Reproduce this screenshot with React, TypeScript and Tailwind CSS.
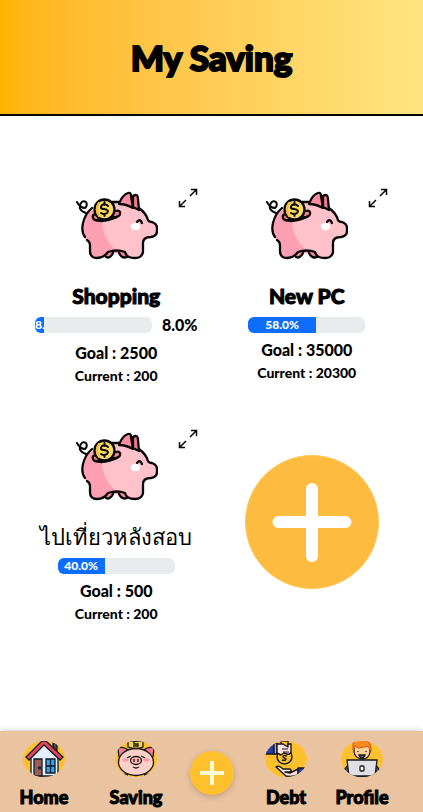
import React from "react";

type Goal = { name: string; percent: number; goal: number; current: number; outside?: boolean; thai?: boolean };

const goals: Goal[] = [
  { name: "Shopping", percent: 8, goal: 2500, current: 200, outside: true },
  { name: "New PC", percent: 58, goal: 35000, current: 20300 },
  { name: "ไปเที่ยวหลังสอบ", percent: 40, goal: 500, current: 200, thai: true },
];

function PiggyBank() {
  return (
    <svg viewBox="0 0 82 70" className="h-[70px] w-[82px]" fill="none" stroke="#080808" strokeWidth="2.3" strokeLinecap="round" strokeLinejoin="round" aria-hidden="true">
      <path d="M29 66 33 60H47L52 66Q47 69 43 62H37Q34 68 29 66Z" fill="#ff8a9f" stroke="none" />
      <path d="M14 61Q15 67 21 67Q27 67 29 63Q30 60 33 60H47Q50 67 57 67Q66 67 67 61V51Q68 46 74 46Q81 45 81 40V35Q79 31 73 30Q70 21 63 17L36 11Q15 14 8 29Q3 41 11 49L14 53Z" fill="#ffc2ca" stroke="none" />
      <path d="M27 20Q15 14 8 29Q3 41 11 49L14 53V61Q15 67 21 67Q27 67 29 63Q30 60 33 60H41Q26 47 26 29Z" fill="#ffa0b2" stroke="none" />
      <path d="M57 5Q62 2 62 8L63 19 57 16Z" fill="#f37991" />
      <path d="M43 13Q46 4 52 2Q55 1 55 5L57 17Q50 13 43 13Z" fill="#ff8ca2" />
      <path d="M36 11H43M63 17Q70 22 72 29Q73 31 76 31Q81 33 81 37V40Q81 45 75 46Q67 46 67 52V61Q66 67 59 67Q50 67 49 61Q41 58 32 61Q28 67 21 67Q14 67 14 60V54Q14 51 11 49M9 46Q5 41 7 32Q9 23 16 17" />
      <path d="M30 66Q34 68 37 62M51 66Q46 68 43 62" />
      <path d="M1 11Q4 17 9 17Q12 14 10 11Q7 9 5 12Q1 19 10 22" strokeWidth="2" />
      <path d="M19 23Q16 24 17 27Q18 30 22 29L40 26Q45 25 44 21Q43 19 40 20" fill="#f48097" />
      <circle cx="28.500" cy="18.500" r="10" fill="#ffda65" />
      <path d="M23 12Q19 18 23 25" stroke="#f6bb42" />
      <path d="M32 15Q29 12 26 14Q23 18 28 18Q34 19 31 22Q28 24 25 22M28.500 11V14M28.500 23V25" strokeWidth="2" />
      <path d="M19 29Q28 32 41 26" />
      <path d="M61 31Q64 27 66 32" />
      <ellipse cx="59.500" cy="35.500" rx="4.800" ry="3.800" fill="#fff" stroke="none" />
    </svg>
  );
}

function ExpandIcon() {
  return (
    <svg viewBox="0 0 20 20" className="size-5" fill="none" stroke="#050505" strokeWidth="1.5" aria-hidden="true">
      <path d="M12 8 18.5 1.5 M13 1.5H18.5V7 M8 12 1.5 18.5 M1.5 13V18.5H7" />
    </svg>
  );
}

function GoalCard({ name, percent, goal, current, outside, thai }: Goal) {
  const label = `${percent.toFixed(1)}%`;
  return (
    <article className="flex h-[241px] flex-col items-center">
      <div className="flex w-full items-start justify-end pr-[14px]">
        <div className="mr-5 mt-[3px]">
          <PiggyBank />
        </div>
        <button type="button" aria-label={`Expand ${name}`}>
          <ExpandIcon />
        </button>
      </div>
      <h2 className={`mt-[21px] h-7 whitespace-nowrap leading-7 ${thai ? "text-[22px] font-normal" : "text-[21px] [-webkit-text-stroke:1px]"}`}>{name}</h2>
      <div className={`mt-[7px] flex items-start gap-[10px] ${outside ? "pb-[3px]" : ""}`}>
        <div role="progressbar" aria-label={name} aria-valuenow={percent} aria-valuemin={0} aria-valuemax={100} className="h-4 w-[117px] overflow-hidden rounded-md bg-[#e9ecef]">
          <div className={`flex h-full overflow-hidden bg-[#0d6efd] text-xs leading-4 text-white ${outside ? "justify-start" : "justify-center"}`} style={{ width: `${percent}%` }}>
            {label}
          </div>
        </div>
        {outside && <span className="text-base leading-4">{label}</span>}
      </div>
      <p className="mt-[5px] text-base leading-6">Goal : {goal}</p>
      <p className="text-sm leading-[22px]">Current : {current}</p>
    </article>
  );
}

function HomeArt() {
  return (
    <g stroke="#111827" strokeWidth="1.3">
      <path d="M30 2H34V13L30 10Z" fill="#46464c" />
      <path d="M8 35V13L21 1 35 13V35Z" fill="#e5f0ff" />
      <path d="M3 16 19 0H23L40 16 37 19 21 4 6 19Z" fill="#e84455" />
      <path d="M11 18H19V35H11Z" fill="#976052" />
      <circle cx="16.500" cy="27" r="1" fill="#f8c86b" />
      <path d="M23 18H32V32H23ZM27.500 18V32M23 25H32" fill="#31a4ee" />
    </g>
  );
}

function PigArt() {
  return (
    <g stroke="#18181b" strokeWidth="1.3">
      <path d="M4 16 3 7Q9 5 14 10M38 16 39 7Q33 5 28 10" fill="#f27e91" />
      <path d="M8 34H13M29 34H34" strokeWidth="3" />
      <ellipse cx="21" cy="21" rx="17.500" ry="13.500" fill="#ffd0c7" />
      <path d="M13 0H28V6Q21 9 13 6Z" fill="#efd34d" />
      <path d="M23 0H19V3H23V5H18" fill="none" />
      <path d="M12 17 16 15M26 15 30 17" fill="none" />
      <ellipse cx="10.500" cy="19" rx="3" ry="1.700" fill="#fa9cab" stroke="none" />
      <ellipse cx="31.500" cy="19" rx="3" ry="1.700" fill="#fa9cab" stroke="none" />
      <ellipse cx="21" cy="19.500" rx="5.500" ry="4" fill="#ffb1aa" />
      <path d="M19 18V21M23 18V21M18 26Q21 28 24 26" fill="none" />
    </g>
  );
}

function DebtArt() {
  return (
    <g stroke="#171717" strokeWidth="1.4" strokeLinejoin="round">
      <path d="M16 0H23V6H16Z" fill="#ffc02e" />
      <circle cx="19.500" cy="15.500" r="7.500" fill="#ffc02e" />
      <path d="M0 13 4 2H9V13Z" fill="#263da8" />
      <path d="M9 2H12V13H9Z" fill="#8fb4ee" />
      <path d="M12 3 18 3 23 6V3H26V11Q25 14 22 13L19 12 16 14 12 12Z" fill="#ffe2e1" />
      <path d="M17 8H23M18 11H24" fill="none" strokeWidth="1" />
      <path d="M22 15Q18 14 18 16Q19 17 21 18Q21 20 17 19" fill="none" />
      <path d="M11 26Q14 24 18 28H25Q28 30 24 31H20L25 32 33 28V34Q27 36 21 35Z" fill="#ffe2e1" />
      <path d="M33 27H40L36 35H33Z" fill="#263da8" />
    </g>
  );
}

function ProfileArt() {
  return (
    <g stroke="#18181b" strokeWidth="1.3">
      <path d="M2 36Q2 25 12 22L21 19 31 22Q39 25 40 36Z" fill="#47505d" />
      <path d="M13 4H29V11Q28 18 21 18Q14 17 13 11Z" fill="#ffd09b" />
      <path d="M12 9V2Q15-3 24 0Q30 0 30 9L27 5 18 7 14 5Z" fill="#ff8b20" stroke="#d9691c" />
      <path d="M17 10V11M25 10V11" />
      <path d="M18 14H24Q23 17 21 17T18 14Z" fill="#547080" />
      <path d="M6 19H36L34 35H8Z" fill="#dfdfe4" />
      <rect x="19" y="25" width="4" height="5" rx="1" fill="#fff" />
    </g>
  );
}

function NavItem({ label, children }: { label: string; children: React.ReactNode }) {
  const id = `clip-${label}`;
  return (
    <a href={`#${label.toLowerCase()}`} className="flex flex-col items-center pt-[10px]">
      <svg viewBox="0 0 42 36" className="h-9 w-[42px]" aria-hidden="true">
        <clipPath id={id}>
          <ellipse cx="21" cy="18" rx="21" ry="18" />
        </clipPath>
        <g clipPath={`url(#${id})`}>
          <rect width="42" height="36" fill="#ffc02e" />
          {children}
        </g>
      </svg>
      <span className="mt-2 text-lg leading-6 [-webkit-text-stroke:1px]">{label}</span>
    </a>
  );
}

export default function App() {
  return (
    <div className="flex min-h-screen flex-col bg-white font-['Lato','Noto_Sans',sans-serif] font-black text-black">
      <header className="flex h-[116px] items-center justify-center border-b-2 border-black bg-linear-to-r from-[#ffb300] to-[#ffe57f]">
        <h1 className="text-[35px] [-webkit-text-stroke:2px]">My Saving</h1>
      </header>
      <main className="grid flex-1 grid-cols-2 content-start px-[21px] pt-[72px]">
        {goals.map((g) => (
          <GoalCard key={g.name} {...g} />
        ))}
        <div className="flex justify-center pt-[26px] pl-[10px]">
          <button type="button" aria-label="Add saving goal" className="size-[134px]">
            <svg viewBox="0 0 134 134" className="size-full" aria-hidden="true">
              <circle cx="67" cy="67" r="66.500" fill="#fdbc40" stroke="#ffca5f" />
              <path d="M67 34V101M33.500 67H100.500" stroke="#fff" strokeWidth="12" strokeLinecap="round" />
            </svg>
          </button>
        </div>
      </main>
      <nav aria-label="Main" className="grid h-[81px] grid-cols-[88fr_96fr_56fr_92fr_60fr] bg-[#eac4a1] pr-[31px] shadow-[0_0_6px_rgba(0,0,0,0.25)]">
        <NavItem label="Home"><HomeArt /></NavItem>
        <NavItem label="Saving"><PigArt /></NavItem>
        <div className="flex items-start justify-center pt-5">
          <button type="button" aria-label="Add" className="flex size-11 items-center justify-center rounded-full bg-[#ffc02e] shadow-[0_2px_6px_rgba(0,0,0,0.2)]">
            <svg viewBox="0 0 24 24" className="size-6" stroke="#fffbd8" strokeWidth="4" aria-hidden="true">
              <path d="M12 0V24M0 12H24" />
            </svg>
          </button>
        </div>
        <NavItem label="Debt"><DebtArt /></NavItem>
        <NavItem label="Profile"><ProfileArt /></NavItem>
      </nav>
    </div>
  );
}
